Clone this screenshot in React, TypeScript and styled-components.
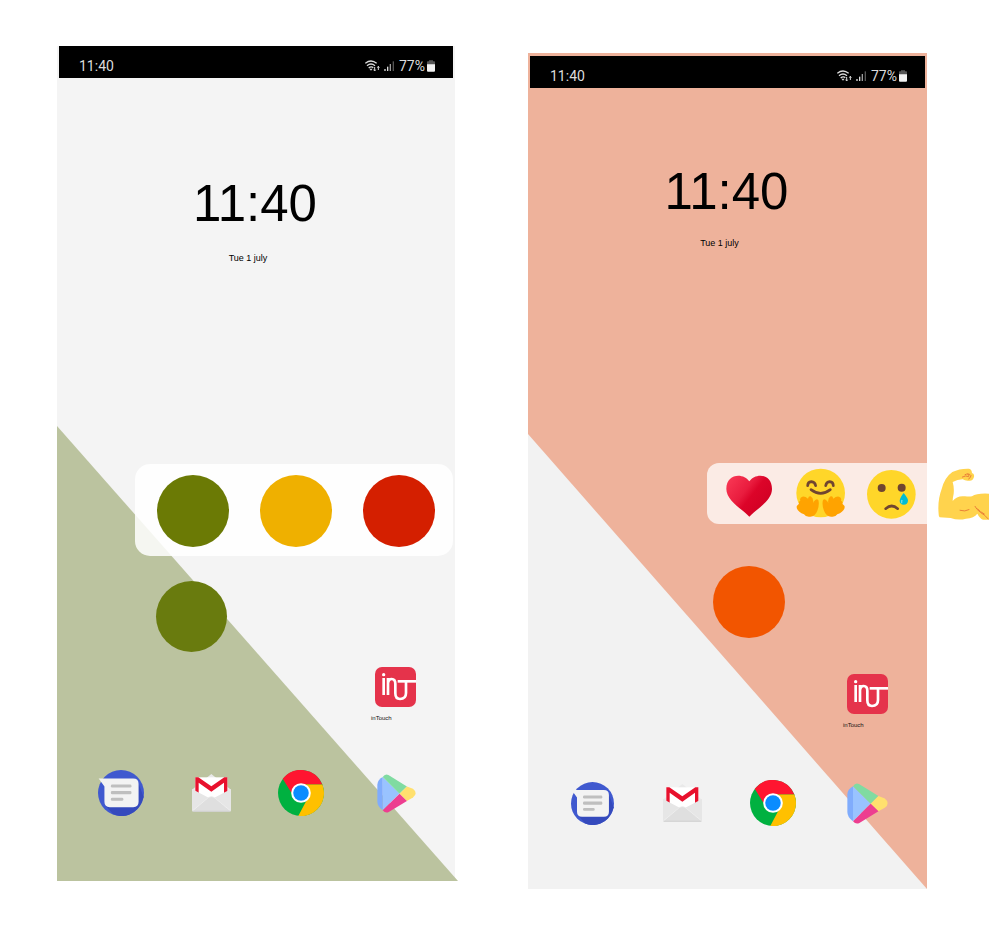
import React from "react";
import styled, { createGlobalStyle, css } from "styled-components";

const GlobalStyle = createGlobalStyle`
  *, *::before { box-sizing: border-box; }
  body {
    margin: 0;
    background: #ffffff;
    color: #000000;
    font-family: "Liberation Sans", Arial, sans-serif;
  }
  svg { display: block; }
`;

const Page = styled.main`
  display: grid;
  grid-template-columns: minmax(0, 398fr) minmax(0, 399fr);
  align-items: start;
  gap: 73px;
  padding: 46px 79px 56px 57px;
`;

type Variant = "calm" | "warm";

const wallpapers = {
  calm: css`
    background: #f4f4f4;
    &::before {
      inset: 380px -3px 0 0;
      background: #bbc39f;
    }
  `,
  warm: css`
    margin-top: 7px;
    padding-top: 3px;
    background: #eeb29b;
    &::before {
      inset: 381px 0 0 0;
      background: #f2f2f2;
    }
  `,
};

const Phone = styled.section<{ $variant: Variant }>`
  position: relative;
  isolation: isolate;
  display: flex;
  flex-direction: column;
  &::before {
    content: "";
    position: absolute;
    z-index: -1;
    clip-path: polygon(0 0, 100% 100%, 0 100%);
  }
  ${({ $variant }) => wallpapers[$variant]}
`;

const StatusBar = styled.header`
  display: flex;
  align-items: center;
  justify-content: space-between;
  height: 32px;
  margin: 0 2px;
  padding: 8px 18px 0 20px;
  background: #000000;
  color: #dcdcdc;
  font-family: Roboto, sans-serif;
  font-size: 14px;
  line-height: 16px;
`;

const StatusIcons = styled.div`
  display: flex;
  align-items: center;
  gap: 4px;
`;

const Battery = styled.span`
  display: flex;
  align-items: center;
  gap: 2px;
`;

const Clock = styled.div<{ $top: number }>`
  display: flex;
  flex-direction: column;
  align-items: center;
  margin-top: ${({ $top }) => $top}px;
  padding-right: 2px;
`;

const Time = styled.time`
  font-size: 51px;
  line-height: 56px;
`;

const DateLine = styled.p<{ $top: number }>`
  margin: ${({ $top }) => $top}px 0 0;
  padding-right: 14px;
  font-size: 9px;
  line-height: 12px;
`;

const MoodTray = styled.div`
  display: flex;
  align-items: center;
  gap: 31px;
  height: 92px;
  margin: 200px 2px 0 78px;
  padding: 2px 0 0 22px;
  border-radius: 15px;
  background: rgba(255, 255, 255, 0.85);
`;

const EmojiTray = styled.div`
  display: flex;
  align-items: center;
  gap: 22px;
  height: 61px;
  margin: 214px -61px 0 179px;
  padding-left: 18px;
  border-radius: 12px;
  background: rgba(255, 255, 255, 0.74);
`;

const PlainButton = styled.button`
  flex: none;
  padding: 0;
  border: 0;
  background: none;
  cursor: pointer;
`;

const Dot = styled(PlainButton)<{ $color: string; $size: number }>`
  width: ${({ $size }) => $size}px;
  height: ${({ $size }) => $size}px;
  border-radius: 50%;
  background: ${({ $color }) => $color};
`;

const Bubble = styled(Dot)<{ $top: number; $left: number }>`
  margin: ${({ $top, $left }) => `${$top}px 0 0 ${$left}px`};
`;

const AppLink = styled.a<{ $top: number }>`
  align-self: flex-end;
  display: flex;
  flex-direction: column;
  gap: 7px;
  margin: ${({ $top }) => $top}px 39px 0 0;
  color: #111111;
  font-size: 6px;
  line-height: 8px;
  text-decoration: none;
  svg { margin-left: 4px; }
`;

const Dock = styled.nav<{ $top: number; $bottom: number }>`
  display: flex;
  align-items: center;
  justify-content: space-between;
  height: 46px;
  margin: ${({ $top, $bottom }) => `${$top}px 0 ${$bottom}px`};
  padding: 0 31px 0 41px;
`;

const DockItem = styled(PlainButton)<{ $wide?: boolean }>`
  display: flex;
  justify-content: center;
  width: ${({ $wide }) => ($wide ? 56 : 46)}px;
`;

const WifiIcon = () => (
  <svg width="15" height="12" viewBox="972 89 45 36" fill="none" stroke="#dcdcdc" strokeWidth="4" aria-hidden="true">
    <path d="M973 99Q990 85 1007 99" />
    <path d="M978 106Q990 96 1002 106" />
    <path d="M983 113Q990 107 997 112" />
    <path d="M985 115L990 121L995 115Z" fill="#dcdcdc" stroke="none" />
    <path d="M1001 110V121M998 118L1001 122L1004 118M1012 119V108M1009 112L1012 108L1015 112" strokeWidth="3" />
  </svg>
);

const SignalIcon = () => (
  <svg width="11" height="12" viewBox="1027 90 33 36" aria-hidden="true">
    <rect x="1028" y="117" width="4" height="6" fill="#dcdcdc" />
    <rect x="1036" y="110" width="4" height="13" fill="#dcdcdc" />
    <rect x="1044" y="102" width="4" height="21" fill="#9d9d9d" />
    <rect x="1053" y="94" width="4" height="29" fill="#555555" />
  </svg>
);

const BatteryIcon = () => (
  <svg width="8" height="12" viewBox="0 0 24 36" aria-hidden="true">
    <path d="M6 1H18V4H22Q24 4 24 7V15H0V7Q0 4 2 4H6Z" fill="#555555" />
    <path d="M0 13H24V32Q24 35 21 35H3Q0 35 0 32Z" fill="#f2f2f2" />
  </svg>
);

const TouchLogo = () => (
  <svg width="41" height="40" viewBox="75 50 123 120" fill="none" stroke="#ffffff" strokeWidth="8" aria-hidden="true">
    <rect x="75" y="50" width="123" height="120" rx="21" fill="#e5334b" stroke="none" />
    <circle cx="101" cy="73" r="5" fill="#ffffff" stroke="none" />
    <path d="M101 83V134" />
    <path d="M114 134V83M114 99Q116 86 125 86Q136 86 136 101V129Q136 146 150 146Q168 146 168 128V93" />
    <path d="M143 93H198" />
  </svg>
);

const MessagesIcon = ({ size }: { size: number }) => (
  <svg width={size} height={size} viewBox="56 47 136 136" aria-hidden="true">
    <circle cx="124" cy="115" r="68" fill="#4059cf" />
    <path d="M77 151L101 178Q123 188 148 179Q181 166 191 127L174 82Z" fill="#354abd" />
    <path d="M58 72H160Q176 72 176 88V141Q176 157 160 157H91Q75 157 75 141V96Z" fill="#f3f3f3" />
    <g fill="#bfbfbf">
      <rect x="94" y="90" width="61" height="9" rx="4" />
      <rect x="94" y="109" width="61" height="10" rx="4" />
      <rect x="94" y="129" width="37" height="9" rx="4" />
    </g>
  </svg>
);

const MailIcon = () => (
  <svg width="39" height="38" viewBox="335 53 117 114" aria-hidden="true">
    <path d="M335 100L393 53L452 100V130H335Z" fill="#e9e9e9" />
    <rect x="345" y="63" width="96" height="70" fill="#ffffff" />
    <path d="M345 63H354L393 90L432 63H441V110H431V79L393 106L355 79V110H345Z" fill="#e8112d" />
    <path d="M335 98L385 124H402L452 98V162Q452 166 448 166H339Q335 166 335 162Z" fill="#e6e6e6" />
    <path d="M337 165L385 123Q393 118 401 123L450 165Z" fill="#dfdfdf" />
    <path d="M337 163L385 123Q393 118 401 123L450 163" fill="none" stroke="#f1f1f1" strokeWidth="2" />
    <path d="M337 165H450" stroke="#c8c8c8" strokeWidth="2" />
  </svg>
);

const ChromeIcon = () => (
  <svg width="46" height="46" viewBox="53 47 136 136" aria-hidden="true">
    <circle cx="121" cy="115" r="68" fill="#00b140" />
    <path d="M67 73A68 68 0 0 1 184 90H121V115H93Z" fill="#ff1530" />
    <path d="M121 90H184A68 68 0 0 1 113 183L138 136Z" fill="#ffc000" />
    <circle cx="121" cy="115" r="29" fill="#ffffff" />
    <circle cx="121" cy="115" r="23" fill="#0a8cff" />
  </svg>
);

const PlayIcon = ({ size }: { size: number }) => (
  <svg width={size} height={size} viewBox="349 53 116 116" aria-hidden="true">
    <path d="M366 62L416 111L366 161Z" fill="#99c3ff" />
    <path d="M366 62V161Q350 150 350 134V85Q350 71 366 62Z" fill="#80acfc" />
    <path d="M366 62Q373 51 383 56L438 90L416 112Z" fill="#80dba1" />
    <path d="M438 90L456 97Q472 110 456 123L438 133L416 112Z" fill="#ffe06e" />
    <path d="M416 112L438 133L384 166Q374 171 366 161Z" fill="#ed3e90" />
  </svg>
);

const HeartEmoji = () => (
  <svg width="49" height="51" viewBox="106 56 147 153" aria-hidden="true">
    <defs>
      <linearGradient id="heart" x1="0" y1="0" x2="1" y2="0.700">
        <stop offset="0" stopColor="#fb3b57" />
        <stop offset="0.450" stopColor="#e91c3e" />
        <stop offset="0.600" stopColor="#dc0429" />
        <stop offset="1" stopColor="#cf0023" />
      </linearGradient>
    </defs>
    <path d="M179 96C162 70 110 71 110 119C110 155 160 181 179 202C198 181 247 155 247 119C247 71 196 70 179 96Z" fill="url(#heart)" />
  </svg>
);

const HugEmoji = () => (
  <svg width="49" height="51" viewBox="316 56 147 153" aria-hidden="true">
    <circle cx="390" cy="131" r="73" fill="#ffd629" />
    <g fill="none" stroke="#704530" strokeWidth="8" strokeLinecap="round">
      <path d="M351 109Q351 98 362 97Q373 98 375 109" />
      <path d="M405 109Q407 98 417 97Q428 98 428 109" />
      <path d="M361 121Q390 143 419 121" />
    </g>
    <g fill="#ffa300">
      <path d="M340 195Q345 204 359 202Q374 200 380 184Q387 166 383 152Q377 145 369 157L367 162Q370 147 360 141Q354 139 352 148Q343 140 335 142Q326 145 329 154Q323 156 325 163L319 169Q317 172 319 178Q323 188 340 195Z" />
      <path d="M440 195Q435 204 421 202Q406 200 400 184Q393 166 397 152Q403 145 411 157L413 162Q410 147 420 141Q426 139 428 148Q437 140 445 142Q454 145 451 154Q457 156 455 163L461 169Q463 172 461 178Q457 188 440 195Z" />
    </g>
  </svg>
);

const CryEmoji = () => (
  <svg width="49" height="51" viewBox="530 56 147 153" aria-hidden="true">
    <circle cx="603" cy="135" r="73" fill="#ffd629" />
    <circle cx="574" cy="116" r="12" fill="#704530" />
    <circle cx="634" cy="115" r="12" fill="#704530" />
    <path d="M586 178Q604 162 622 178" fill="none" stroke="#704530" strokeWidth="8" strokeLinecap="round" />
    <path d="M640 131Q653 147 653 154Q652 166 640 166Q628 165 628 154Q629 145 640 131Z" fill="#00bcd4" />
    <path d="M634 153V160" stroke="#6edbe7" strokeWidth="4" strokeLinecap="round" />
  </svg>
);

const MuscleEmoji = () => (
  <svg width="51" height="52" viewBox="739 52 153 156" aria-hidden="true">
    <path d="M741 191Q737 149 750 115Q759 80 782 64Q804 53 832 54Q840 55 841 67Q849 69 847 79Q842 93 831 90Q821 91 813 86Q797 87 783 94Q788 111 786 129Q783 142 783 151Q796 134 820 137Q833 138 841 137Q855 127 892 129V207H874Q864 203 857 189Q847 202 823 204Q800 210 777 202L744 200Q741 199 741 191Z" fill="#ffd34d" />
    <g fill="none" stroke="#ea8038" strokeWidth="3" strokeLinecap="round">
      <path d="M812 79Q823 73 831 78Q835 72 828 70" />
      <path d="M820 72Q832 66 838 75Q836 83 831 85" />
      <path d="M805 179Q820 184 832 177" />
      <path d="M850 167Q854 176 866 185Q879 192 890 205" />
      <path d="M858 175Q864 183 878 190" />
    </g>
  </svg>
);

const Status = () => (
  <StatusBar>
    <span>11:40</span>
    <StatusIcons>
      <WifiIcon />
      <SignalIcon />
      <Battery>
        77%
        <BatteryIcon />
      </Battery>
    </StatusIcons>
  </StatusBar>
);

const ClockBlock = ({ top, gap }: { top: number; gap: number }) => (
  <Clock $top={top}>
    <Time>11:40</Time>
    <DateLine $top={gap}>Tue 1 july</DateLine>
  </Clock>
);

const TouchApp = ({ top }: { top: number }) => (
  <AppLink href="#intouch" $top={top}>
    <TouchLogo />
    inTouch
  </AppLink>
);

type DockProps = { top: number; bottom: number; messages: number; play: number };

const AppDock = ({ top, bottom, messages, play }: DockProps) => (
  <Dock aria-label="Apps" $top={top} $bottom={bottom}>
    <DockItem aria-label="Messages"><MessagesIcon size={messages} /></DockItem>
    <DockItem aria-label="Mail"><MailIcon /></DockItem>
    <DockItem aria-label="Browser"><ChromeIcon /></DockItem>
    <DockItem aria-label="Store" $wide><PlayIcon size={play} /></DockItem>
  </Dock>
);

const moods = [
  { name: "Good", color: "#6b7a05" },
  { name: "Okay", color: "#efb000" },
  { name: "Bad", color: "#d41f00" },
];

const emojis = [
  { name: "Love", Icon: HeartEmoji },
  { name: "Hug", Icon: HugEmoji },
  { name: "Sad", Icon: CryEmoji },
  { name: "Strength", Icon: MuscleEmoji },
];

export default function App() {
  return (
    <>
      <GlobalStyle />
      <Page>
        <Phone $variant="calm">
          <Status />
          <ClockBlock top={98} gap={20} />
          <MoodTray>
            {moods.map(({ name, color }) => (
              <Dot key={name} $color={color} $size={72} aria-label={name} />
            ))}
          </MoodTray>
          <Bubble $color="#697b0e" $size={71} $top={25} $left={99} aria-label="My mood" />
          <TouchApp top={15} />
          <AppDock top={48} bottom={65} messages={46} play={39} />
        </Phone>
        <Phone $variant="warm">
          <Status />
          <ClockBlock top={76} gap={17} />
          <EmojiTray>
            {emojis.map(({ name, Icon }) => (
              <PlainButton key={name} aria-label={name}>
                <Icon />
              </PlainButton>
            ))}
          </EmojiTray>
          <Bubble $color="#f25500" $size={72} $top={42} $left={185} aria-label="Friend's mood" />
          <TouchApp top={36} />
          <AppDock top={51} bottom={63} messages={43} play={41} />
        </Phone>
      </Page>
    </>
  );
}
